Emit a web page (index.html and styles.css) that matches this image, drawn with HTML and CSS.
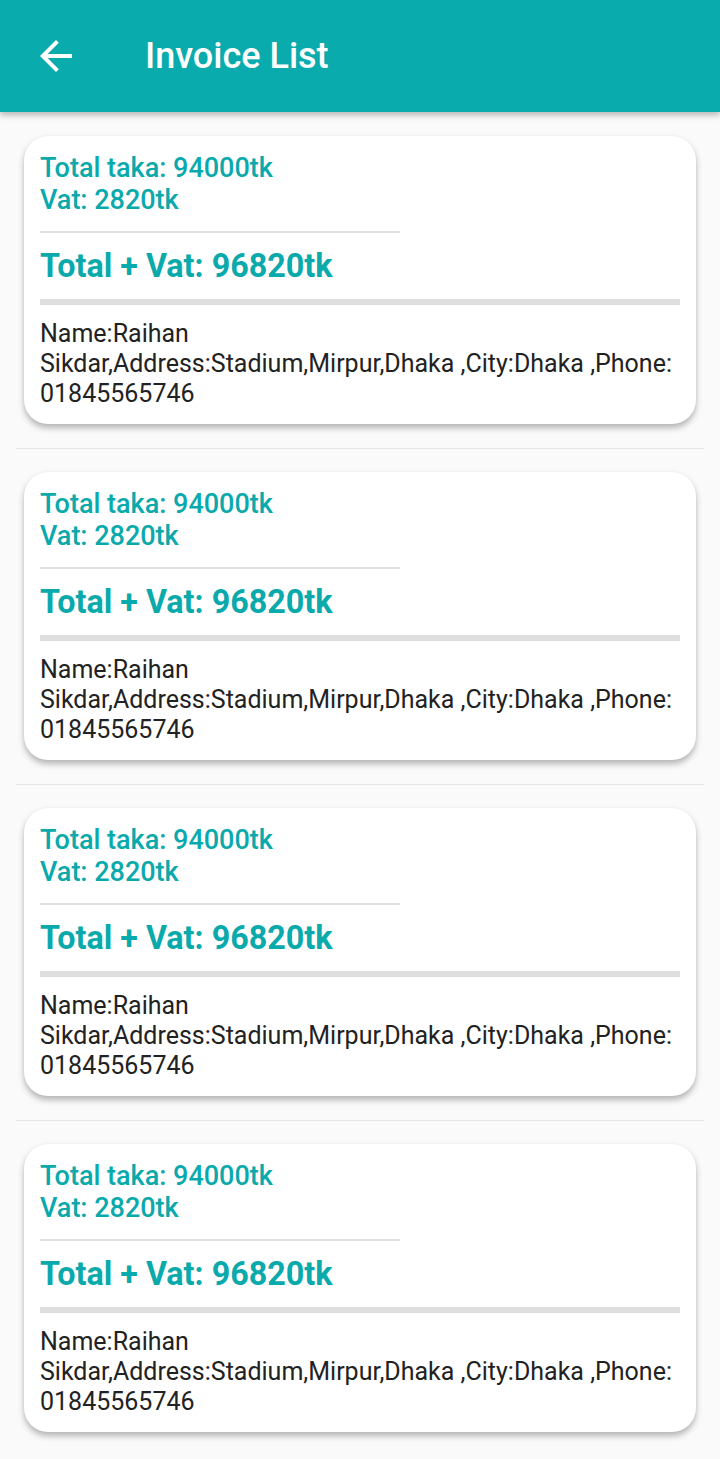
FILE: index.html
```html
<!DOCTYPE html>
<html>
<head>
<meta charset="utf-8">
<link rel="stylesheet" href="styles.css">
</head>
<body>
<header class="appbar">
  <svg class="back" width="48" height="48" viewBox="0 0 24 24"><path d="M20 11H7.83l5.59-5.59L12 4l-8 8 8 8 1.41-1.41L7.83 13H20v-2z" fill="#fff"/></svg>
  <h1 class="title">Invoice List</h1>
</header>
<main class="list">
  <div class="item">
    <div class="card">
      <div class="line">Total taka: 94000tk</div>
      <div class="line">Vat: 2820tk</div>
      <div class="thin"></div>
      <div class="grand">Total + Vat: 96820tk</div>
      <div class="thick"></div>
      <div class="info">Name:Raihan <span class="nw">Sikdar,Address:Stadium,Mirpur,Dhaka ,City:Dhaka ,Phone:</span> 01845565746</div>
    </div>
  </div>
  <div class="item">
    <div class="card">
      <div class="line">Total taka: 94000tk</div>
      <div class="line">Vat: 2820tk</div>
      <div class="thin"></div>
      <div class="grand">Total + Vat: 96820tk</div>
      <div class="thick"></div>
      <div class="info">Name:Raihan <span class="nw">Sikdar,Address:Stadium,Mirpur,Dhaka ,City:Dhaka ,Phone:</span> 01845565746</div>
    </div>
  </div>
  <div class="item">
    <div class="card">
      <div class="line">Total taka: 94000tk</div>
      <div class="line">Vat: 2820tk</div>
      <div class="thin"></div>
      <div class="grand">Total + Vat: 96820tk</div>
      <div class="thick"></div>
      <div class="info">Name:Raihan <span class="nw">Sikdar,Address:Stadium,Mirpur,Dhaka ,City:Dhaka ,Phone:</span> 01845565746</div>
    </div>
  </div>
  <div class="item">
    <div class="card">
      <div class="line">Total taka: 94000tk</div>
      <div class="line">Vat: 2820tk</div>
      <div class="thin"></div>
      <div class="grand">Total + Vat: 96820tk</div>
      <div class="thick"></div>
      <div class="info">Name:Raihan <span class="nw">Sikdar,Address:Stadium,Mirpur,Dhaka ,City:Dhaka ,Phone:</span> 01845565746</div>
    </div>
  </div>
</main>
</body>
</html>
```
FILE: styles.css
```css
html, body {
  margin: 0;
  padding: 0;
  background: #fafafa;
  font-family: Roboto, "Liberation Sans", sans-serif;
  overflow: hidden;
}
.appbar {
  height: 112px;
  background: #09abad;
  display: flex;
  align-items: center;
  box-shadow: 0 3px 6px rgba(0,0,0,0.28);
  position: relative;
  z-index: 1;
}
.back {
  margin-left: 32px;
  flex: none;
}
.title {
  margin: 0 0 0 65px;
  color: #fff;
  font-size: 36px;
  font-weight: 500;
  line-height: 40px;
}
.list {
  padding: 0 16px;
}
.item {
  padding: 24px 8px;
  border-bottom: 1px solid #e6e6e6;
  margin-bottom: -1px;
}
.card {
  background: #fff;
  border-radius: 24px;
  box-shadow: 0 4px 6px rgba(0,0,0,0.28), 0 0 2px rgba(0,0,0,0.06);
  padding: 16px 16px 14px;
  height: 288px;
  box-sizing: border-box;
}
.line {
  color: #0aa9ab;
  font-size: 27px;
  font-weight: 500;
  line-height: 32px;
}
.thin {
  width: 360px;
  height: 2px;
  background: #e0e0e0;
  margin-top: 15px;
}
.grand {
  color: #0aa9ab;
  font-size: 32.3px;
  font-weight: 700;
  line-height: 38px;
  margin-top: 14px;
}
.thick {
  height: 6px;
  background: #dedede;
  margin-top: 14px;
}
.info {
  color: #222;
  font-size: 25px;
  line-height: 30px;
  margin-top: 14px;
}
.nw {
  white-space: nowrap;
}
```
